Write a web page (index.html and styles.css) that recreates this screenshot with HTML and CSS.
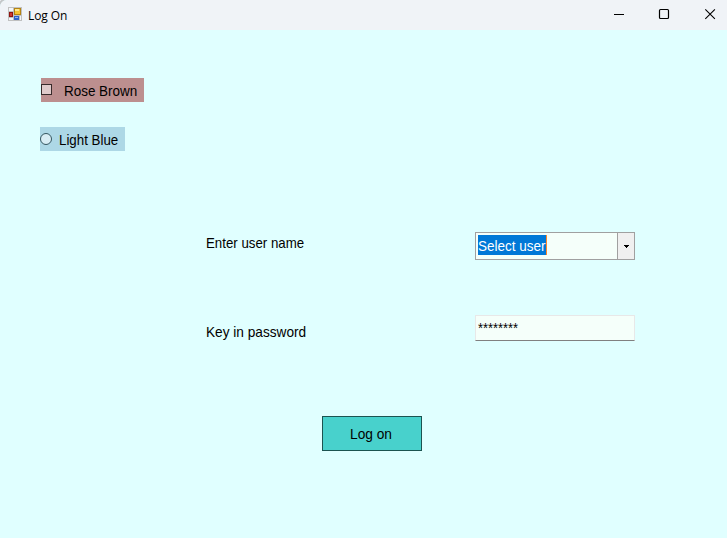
FILE: index.html
```
<!DOCTYPE html>
<html lang="en">
<head>
<meta charset="utf-8">
<title>Log On</title>
<link rel="stylesheet" href="styles.css">
</head>
<body>
<div class="window">
  <header class="titlebar">
    <svg class="app-icon" width="14" height="14" viewBox="0 0 14 14" shape-rendering="crispEdges">
      <path fill="#c0c0c0" d="M0 0h14v14H0z"/>
      <path fill="#f3f5f8" d="M1 1h4v3H1zM1 11h4v2H1zM12 9h1v4h-1z"/>
      <path fill="#8f1410" d="M1 5h4v5H1z"/><path fill="#cf3a30" d="M2 6h2v3H2z"/>
      <path fill="#b58412" d="M6 1h7v7H6z"/><path fill="#f7c332" d="M7 2h5v5H7z"/><path fill="#ffe78c" d="M7 2h4v2H7z"/>
      <path fill="#2f63c8" d="M6 9h5v4H6z"/><path fill="#8cb4f4" d="M7 10h3v1H7z"/>
    </svg>
    <h1 class="title">Log On</h1>
    <div class="controls">
      <svg class="control" width="45" height="30" viewBox="0 0 45 30"><path d="M14 14.5h10" stroke="#000"/></svg>
      <svg class="control" width="46" height="30" viewBox="0 0 46 30"><rect x="14.5" y="9.5" width="9" height="9" rx="1" fill="none" stroke="#000" stroke-width="1.2"/></svg>
      <svg class="control" width="32" height="30" viewBox="0 0 32 30"><path d="M14.3 9.3l9.6 9.6M23.9 9.3l-9.6 9.6" stroke="#000" stroke-width="1.1"/></svg>
    </div>
  </header>
  <main class="content">
    <label class="option rose"><span class="mark square"></span><span class="text t-rose">Rose Brown</span></label>
    <label class="option blue"><span class="mark circle"></span><span class="text t-blue">Light Blue</span></label>
    <div class="row user-row">
      <span class="text t-user">Enter user name</span>
      <div class="combo">
        <div class="combo-value"><span class="selection"><span class="text t-select">Select user</span></span></div>
        <div class="arrow"><svg width="5" height="3" viewBox="0 0 5 3" shape-rendering="crispEdges"><path d="M0 0h5v1H4v1H3v1H2V2H1V1H0z"/></svg></div>
      </div>
    </div>
    <div class="row password-row">
      <span class="text t-pass">Key in password</span>
      <div class="password"><span class="text t-stars">********</span></div>
    </div>
    <button class="logon" type="button"><span class="text t-log">Log on</span></button>
  </main>
</div>
</body>
</html>
```
FILE: styles.css
```
* { box-sizing: border-box; }
body { margin: 0; background: #f0f3f7; }
.window {
  width: 727px;
  height: 538px;
  overflow: hidden;
  display: flex;
  flex-direction: column;
  border-top-left-radius: 7px;
  box-shadow: 0 0 0 2px #c4c6c8;
  background: #e0ffff;
  color: #000;
  font: 15px/18px "Liberation Sans", Arial, sans-serif;
}
.titlebar {
  height: 30px;
  flex: none;
  display: flex;
  align-items: center;
  padding: 0 4px 0 8px;
  background: #f0f3f7;
}
.app-icon { display: block; margin-top: -2px; }
.title {
  margin: 1px 0 0 6px;
  font: 12px/16px "Open Sans", "Noto Sans", sans-serif;
  letter-spacing: -0.1px;
}
.controls { display: flex; margin-left: auto; }
.control { display: block; }
.content { flex: 1; display: flex; flex-direction: column; align-items: flex-start; }
.text { display: block; width: max-content; white-space: nowrap; transform-origin: left center; }
.t-rose { transform: scaleX(0.896); }
.t-blue { transform: scaleX(0.887); }
.t-user { transform: scaleX(0.885); }
.t-select { transform: scaleX(0.9); }
.t-pass { transform: scaleX(0.91); }
.t-stars { transform: scaleX(0.857); }
.t-log { transform: scaleX(0.915); }
.option { height: 24px; display: flex; align-items: center; }
.option .text { margin-top: 2px; }
.rose { width: 103px; margin: 48px 0 0 41px; background: #bc8f8f; }
.blue { width: 85px; margin: 25px 0 0 40px; background: #add8e6; }
.mark { flex: none; display: block; margin-top: -1px; }
.square { width: 11px; height: 11px; margin-right: 12px; border: 1px solid #382b2b; background: #dfcaca; }
.circle { width: 12px; height: 12px; margin-right: 7px; border: 1px solid #345660; border-radius: 50%; background: #d8edf4; }
.row { display: grid; grid-template-columns: 269px 160px; margin-left: 206px; align-items: start; }
.user-row { margin-top: 81px; }
.user-row > .text { margin-top: 2px; }
.combo { height: 28px; display: flex; border: 1px solid #a0a0a0; background: #f5fffa; }
.combo-value { flex: 1; padding: 2px; }
.selection { display: block; width: 69px; height: 20px; padding-top: 2px; background: #0078d7; border-right: 1px solid #ff8728; color: #fff; }
.arrow { width: 17px; display: flex; align-items: center; justify-content: center; background: #f0f0f0; border-left: 1px solid #a0a0a0; }
.password-row { margin-top: 55px; }
.password-row > .text { margin-top: 8px; }
.password { height: 26px; padding: 3px 2px; border: 1px solid #e8e8e8; border-bottom-color: #808080; background: #f5fffa; }
.logon {
  width: 100px;
  height: 35px;
  margin: 75px 0 0 322px;
  padding: 0 0 0 27px;
  border: 1px solid #1c5350;
  border-radius: 0;
  background: #48d1cc;
  color: #000;
  font: inherit;
  text-align: left;
}
```
